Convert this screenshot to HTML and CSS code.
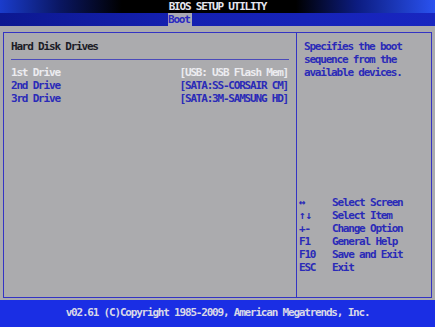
FILE: index.html
```html
<!DOCTYPE html>
<html lang="en">
<head>
    <meta charset="UTF-8">
    <meta name="viewport" content="width=device-width, initial-scale=1.0">
    <title>BIOS Setup Utility</title>
    <link rel="stylesheet" href="styles.css">
</head>
<body>
    <div class="titlebar">BIOS SETUP UTILITY</div>
    <div class="tabs"><span class="tab active">Boot</span></div>

    <div class="main">
        <div class="panel">
            <div class="left">
                <div class="heading">Hard Disk Drives</div>
                <div class="rule"></div>
                <div class="row selected"><span>1st Drive</span><span>[USB: USB Flash Mem]</span></div>
                <div class="row"><span>2nd Drive</span><span>[SATA:SS-CORSAIR CM]</span></div>
                <div class="row"><span>3rd Drive</span><span>[SATA:3M-SAMSUNG HD]</span></div>
            </div>
            <div class="right">
                <div class="help">Specifies the boot<br>sequence from the<br>available devices.</div>
                <div class="keys">
                    <div class="key"><span class="k arrow">&#8596;</span><span>Select Screen</span></div>
                    <div class="key"><span class="k arrow">&#8593;&#8595;</span><span>Select Item</span></div>
                    <div class="key"><span class="k">+-</span><span>Change Option</span></div>
                    <div class="key"><span class="k">F1</span><span>General Help</span></div>
                    <div class="key"><span class="k">F10</span><span>Save and Exit</span></div>
                    <div class="key"><span class="k">ESC</span><span>Exit</span></div>
                </div>
            </div>
        </div>
    </div>

    <div class="footer">v02.61 (C)Copyright 1985-2009, American Megatrends, Inc.</div>
</body>
</html>
```

FILE: styles.css
```css
* {
    margin: 0;
    padding: 0;
    box-sizing: border-box;
}

body {
    width: 435px;
    height: 327px;
    overflow: hidden;
    background: #ababae;
    font-family: "DejaVu Sans Mono", "Liberation Mono", monospace;
    font-weight: bold;
    font-size: 11px;
    letter-spacing: -1.2px;
    line-height: 13px;
    color: #2a2ab8;
}

.titlebar {
    height: 13px;
    text-align: center;
    color: #e6e6ee;
    background: linear-gradient(to right, #1a3ccc 0%, #0a1660 14%, #000000 28%, #000000 68%, #0c1c80 82%, #2a52f0 100%);
}

.tabs {
    height: 13px;
    padding-left: 168px;
    background: linear-gradient(to right, #0c1890 0%, #1420b0 40%, #1826c0 100%);
}

.tab {
    display: inline-block;
    height: 13px;
    padding: 0 2px 0 0;
}

.tab.active {
    background: #a9a9b4;
    color: #2a2ac0;
}

.main {
    height: 274px;
    padding: 6px 3px 2px 3px;
}

.panel {
    height: 266px;
    border: 1px solid #3434c4;
    display: flex;
}

.left {
    width: 292px;
    padding: 7px 7px 0 7px;
}

.heading {
    color: #1c1c26;
}

.rule {
    height: 1px;
    background: #4a4aba;
    margin: 6px 0;
}

.row {
    display: flex;
    justify-content: space-between;
    padding-right: 1px;
}

.row.selected {
    color: #ececf0;
}

.right {
    flex: 1;
    border-left: 1px solid #3434c4;
    display: flex;
    flex-direction: column;
    padding: 7px 2px 23px 2px;
}

.help {
    padding-left: 5px;
}

.keys {
    margin-top: auto;
}

.key {
    display: flex;
}

.key .k {
    width: 33px;
}

.key .arrow {
    letter-spacing: 0;
}

.footer {
    height: 27px;
    line-height: 25px;
    text-align: center;
    color: #d8d8e8;
    background: #1a2ee4;
}
```
